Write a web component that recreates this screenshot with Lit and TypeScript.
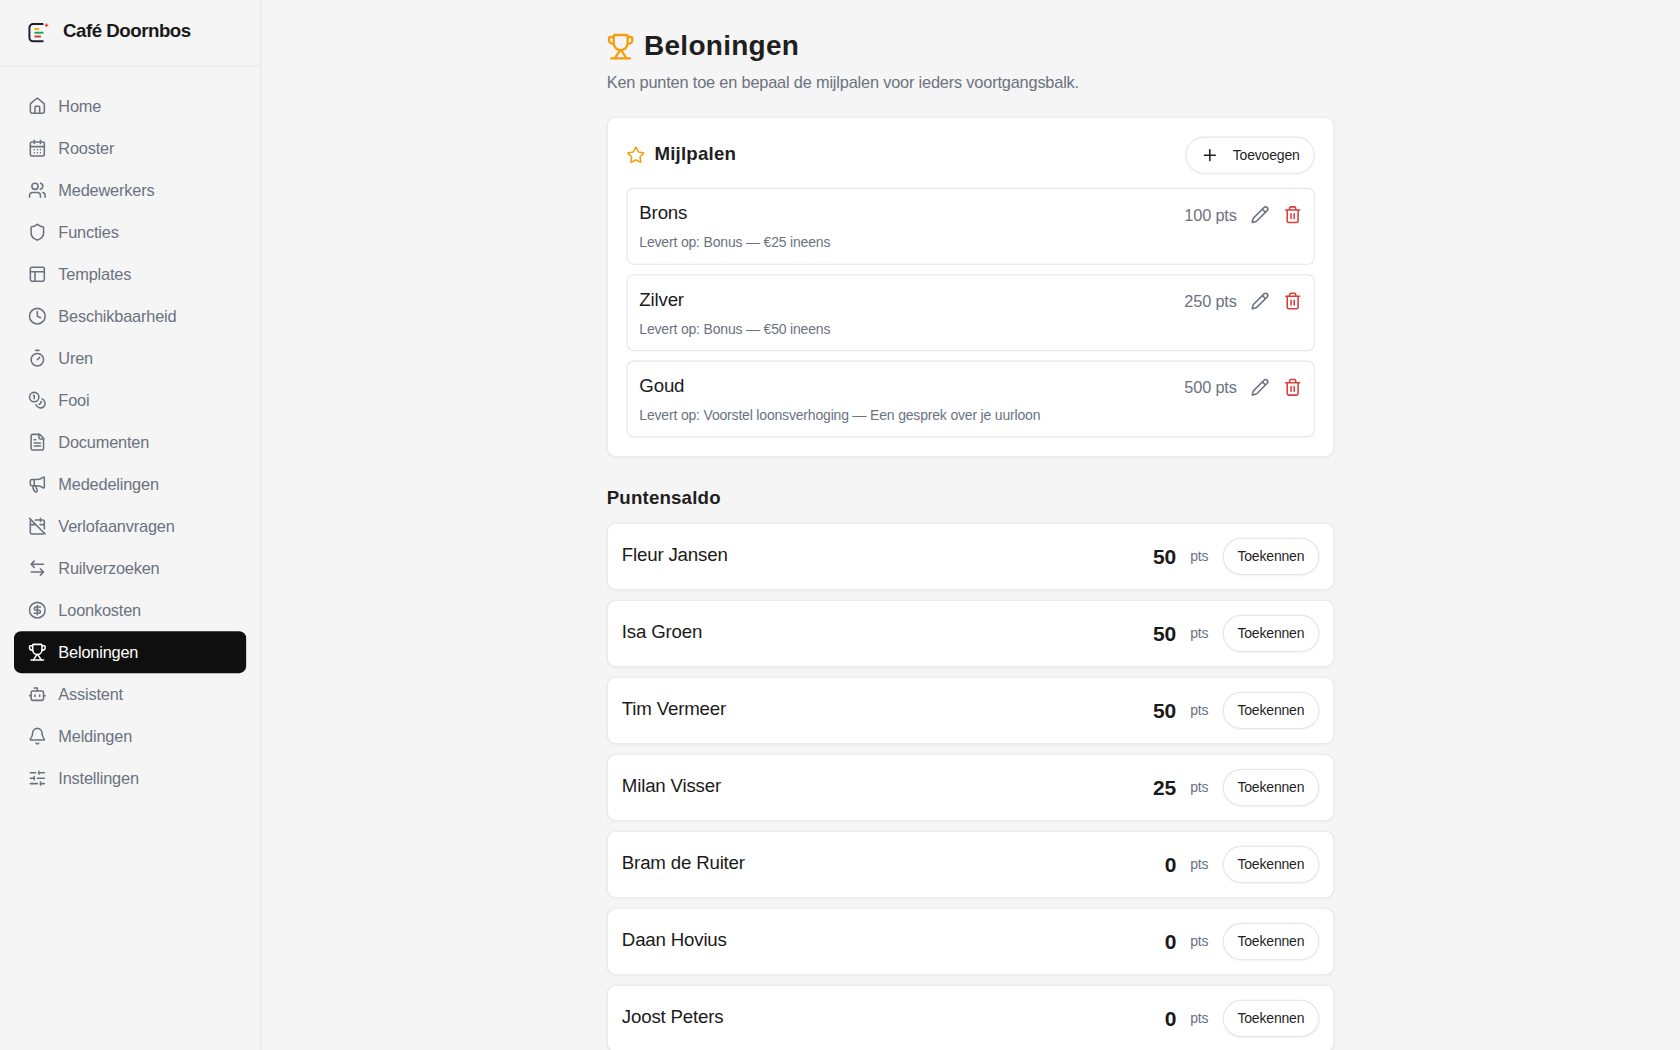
import { LitElement, html, css, svg } from "lit";
import { customElement, property } from "lit/decorators.js";
import { classMap } from "lit/directives/class-map.js";

const ICONS: Record<string, unknown> = {
  home: svg`<path d="M15 21v-8a1 1 0 0 0-1-1h-4a1 1 0 0 0-1 1v8"/><path d="M3 10a2 2 0 0 1 .709-1.528l7-6a2 2 0 0 1 2.582 0l7 6A2 2 0 0 1 21 10v9a2 2 0 0 1-2 2H5a2 2 0 0 1-2-2z"/>`,
  calendar: svg`<path d="M8 2v4M16 2v4"/><rect width="18" height="18" x="3" y="4" rx="2"/><path d="M3 10h18M8 14h.01M12 14h.01M16 14h.01M8 18h.01M12 18h.01M16 18h.01"/>`,
  users: svg`<path d="M16 21v-2a4 4 0 0 0-4-4H6a4 4 0 0 0-4 4v2"/><circle cx="9" cy="7" r="4"/><path d="M22 21v-2a4 4 0 0 0-3-3.87"/><path d="M16 3.13a4 4 0 0 1 0 7.75"/>`,
  shield: svg`<path d="M20 13c0 5-3.5 7.5-7.66 8.95a1 1 0 0 1-.67-.01C7.5 20.5 4 18 4 13V6a1 1 0 0 1 1-1c2 0 4.5-1.2 6.24-2.72a1.17 1.17 0 0 1 1.52 0C14.51 3.81 17 5 19 5a1 1 0 0 1 1 1z"/>`,
  panels: svg`<rect width="18" height="18" x="3" y="3" rx="2"/><path d="M3 9h18M9 21V9"/>`,
  clock: svg`<circle cx="12" cy="12" r="10"/><path d="M12 6v6l4 2"/>`,
  timer: svg`<path d="M10 2h4M12 14l3-3"/><circle cx="12" cy="14" r="8"/>`,
  coins: svg`<circle cx="8" cy="8" r="6"/><path d="M18.09 10.37A6 6 0 1 1 10.34 18"/><path d="M7 6h1v4"/><path d="m16.71 13.88.7.71-2.82 2.82"/>`,
  file: svg`<path d="M15 2H6a2 2 0 0 0-2 2v16a2 2 0 0 0 2 2h12a2 2 0 0 0 2-2V7Z"/><path d="M14 2v4a2 2 0 0 0 2 2h4M10 9H8M16 13H8M16 17H8"/>`,
  megaphone: svg`<path d="M11 6a13 13 0 0 0 8.4-2.8A1 1 0 0 1 21 4v12a1 1 0 0 1-1.6.8A13 13 0 0 0 11 14H5a2 2 0 0 1-2-2V8a2 2 0 0 1 2-2z"/><path d="M6 14a12 12 0 0 0 2.4 7.2 2 2 0 0 0 3.2-2.4A8 8 0 0 1 10 14"/><path d="M8 6v8"/>`,
  calendarOff: svg`<path d="M4.2 4.2A2 2 0 0 0 3 6v14a2 2 0 0 0 2 2h14a2 2 0 0 0 1.82-1.18"/><path d="M21 15.5V6a2 2 0 0 0-2-2H9.5"/><path d="M16 2v4M3 10h7M21 10h-5.5M2 2l20 20"/>`,
  swap: svg`<path d="M8 3 4 7l4 4M4 7h16M16 21l4-4-4-4M20 17H4"/>`,
  dollar: svg`<circle cx="12" cy="12" r="10"/><path d="M16 8h-6a2 2 0 1 0 0 4h4a2 2 0 1 1 0 4H8M12 18V6"/>`,
  trophy: svg`<path d="M11.4 15.2 7 21.978M12.6 15.2 17 21.978"/><path d="M18 9.4h1a3 3 0 0 0 3-3V5a1.3 1.3 0 0 0-1.3-1.3H18"/><path d="M4 22h16"/><path d="M6 9a6 6 0 0 0 12 0V3a1 1 0 0 0-1-1H7a1 1 0 0 0-1 1z"/><path d="M6 9.4H5a3 3 0 0 1-3-3V5a1.3 1.3 0 0 1 1.3-1.3H6"/>`,
  bot: svg`<path d="M12 8V4H8"/><rect width="16" height="12" x="4" y="8" rx="2"/><path d="M2 14h2M20 14h2M15 13v2M9 13v2"/>`,
  bell: svg`<path d="M10.268 21a2 2 0 0 0 3.464 0"/><path d="M3.262 15.326A1 1 0 0 0 4 17h16a1 1 0 0 0 .74-1.673C19.41 13.956 18 12.499 18 8A6 6 0 0 0 6 8c0 4.499-1.411 5.956-2.738 7.326"/>`,
  sliders: svg`<path d="M10 5H3M12 19H3M14 3v4M16 17v4M21 12h-9M21 19h-5M21 5h-7M8 10v4M8 12H3"/>`,
  star: svg`<path d="M11.525 2.295a.53.53 0 0 1 .95 0l2.31 4.679a2.123 2.123 0 0 0 1.595 1.16l5.166.756a.53.53 0 0 1 .294.904l-3.736 3.638a2.123 2.123 0 0 0-.611 1.878l.882 5.14a.53.53 0 0 1-.771.56l-4.618-2.428a2.122 2.122 0 0 0-1.973 0L6.396 21.01a.53.53 0 0 1-.77-.56l.881-5.139a2.122 2.122 0 0 0-.611-1.879L2.16 9.795a.53.53 0 0 1 .294-.906l5.165-.755a2.122 2.122 0 0 0 1.597-1.16z"/>`,
  plus: svg`<path d="M5 12h14M12 5v14"/>`,
  pencil: svg`<path d="M21.174 6.812a1 1 0 0 0-3.986-3.987L3.842 16.174a2 2 0 0 0-.5.83l-1.321 4.352a.5.5 0 0 0 .623.622l4.353-1.32a2 2 0 0 0 .83-.497z"/><path d="m15 5 4 4"/>`,
  trash: svg`<path d="M3 6h18M19 6v14a2 2 0 0 1-2 2H7a2 2 0 0 1-2-2V6M8 6V4a2 2 0 0 1 2-2h4a2 2 0 0 1 2 2v2M10 11v6M14 11v6"/>`,
};

@customElement("ui-icon")
class UiIcon extends LitElement {
  @property() name = "";
  static styles = css`
    :host { display: block; flex: none; width: 16px; height: 16px; }
    svg { display: block; width: 100%; height: 100%; fill: none; stroke: currentColor; stroke-width: 2; stroke-linecap: round; stroke-linejoin: round; }
  `;
  render() {
    return html`<svg viewBox="0 0 24 24" aria-hidden="true">${ICONS[this.name]}</svg>`;
  }
}

const NAV = [
  ["home", "Home"], ["calendar", "Rooster"], ["users", "Medewerkers"], ["shield", "Functies"],
  ["panels", "Templates"], ["clock", "Beschikbaarheid"], ["timer", "Uren"], ["coins", "Fooi"],
  ["file", "Documenten"], ["megaphone", "Mededelingen"], ["calendarOff", "Verlofaanvragen"],
  ["swap", "Ruilverzoeken"], ["dollar", "Loonkosten"], ["trophy", "Beloningen"],
  ["bot", "Assistent"], ["bell", "Meldingen"], ["sliders", "Instellingen"],
];

const MILESTONES = [
  { name: "Brons", points: 100, reward: "Levert op: Bonus — €25 ineens" },
  { name: "Zilver", points: 250, reward: "Levert op: Bonus — €50 ineens" },
  { name: "Goud", points: 500, reward: "Levert op: Voorstel loonsverhoging — Een gesprek over je uurloon" },
];

const BALANCES: [string, number][] = [
  ["Fleur Jansen", 50], ["Isa Groen", 50], ["Tim Vermeer", 50], ["Milan Visser", 25],
  ["Bram de Ruiter", 0], ["Daan Hovius", 0], ["Joost Peters", 0],
];

@customElement("app-root")
class AppRoot extends LitElement {
  static styles = css`
    :host {
      display: block;
      width: 1680px;
      height: 1050px;
      overflow: hidden;
      background: #f5f5f5;
      font-family: "Liberation Sans", Arial, sans-serif;
      font-size: 14px;
      letter-spacing: -0.011em;
      color: #1a1a1a;
    }
    * { box-sizing: border-box; }
    .app { display: flex; width: 1440px; height: 900px; overflow: hidden; background: #f5f5f5; transform: scale(1.166667); transform-origin: 0 0; }
    .sidebar { flex: none; width: 224px; border-right: 1px solid #e5e7e9; }
    .brand { display: flex; align-items: center; gap: 10px; height: 57px; padding: 0 24px; border-bottom: 1px solid #e5e7e9; }
    .logo { flex: none; width: 20px; height: 20px; }
    .brand-name { padding-bottom: 3px; font-size: 16px; line-height: 24px; font-weight: 700; letter-spacing: -0.025em; }
    .nav { display: flex; flex-direction: column; padding: 16px 12px; }
    .nav-item { display: flex; align-items: center; gap: 10px; height: 36px; padding: 0 12px; border-radius: 6px; color: #6b7280; line-height: 20px; }
    .nav-item.active { background: #0f0f0f; color: #fff; }
    .main { flex: 1; padding: 24px; overflow: hidden; }
    .content { width: 624px; margin: 0 auto; }
    .title { display: flex; align-items: center; gap: 8px; height: 32px; color: #f59e0b; }
    .title ui-icon { width: 24px; height: 24px; }
    h1, h2 { margin: 0; padding-bottom: 3px; color: #1f1f1f; font-weight: 700; letter-spacing: 0.01em; }
    h1 { font-size: 24px; line-height: 29px; }
    h2 { font-size: 16px; line-height: 21px; }
    .subtitle { margin: 4px 0 20px; line-height: 20px; color: #6b7280; }
    .card { border: 1px solid #e5e7e9; border-radius: 8px; background: #fff; box-shadow: 0 1px 2px rgb(0 0 0 / 0.02); }
    .milestones { display: flex; flex-direction: column; gap: 8px; padding: 16px; }
    .card-head { display: flex; align-items: center; gap: 8px; height: 32px; margin-bottom: 4px; color: #f59e0b; }
    .card-head h2 { flex: 1; }
    .pill { display: flex; align-items: center; gap: 12px; height: 32px; padding: 0 12px; border: 1px solid #e5e7e9; border-radius: 16px; background: #fff; color: #1f1f1f; font: inherit; font-size: 12px; letter-spacing: inherit; box-shadow: 0 1px 2px rgb(0 0 0 / 0.04); }
    .milestone { display: flex; flex-direction: column; gap: 4px; padding: 10px; border: 1px solid #e5e7e9; border-radius: 6px; }
    .line { display: flex; align-items: center; gap: 12px; height: 24px; color: #6b7280; }
    .name { flex: 1; padding-bottom: 3px; font-size: 16px; line-height: 21px; color: #1a1a1a; }
    .danger { color: #dc3c3c; }
    .reward { font-size: 12px; line-height: 16px; color: #6b7280; }
    .section-title { margin: 24px 0 8px; }
    .balances { display: flex; flex-direction: column; gap: 8px; }
    .balance { display: flex; align-items: center; gap: 12px; padding: 12px; }
    .points { font-size: 18px; font-weight: 700; }
    .unit { font-size: 12px; color: #6b7280; }
  `;

  render() {
    return html`<div class="app">
      <aside class="sidebar">
        <div class="brand">
          <svg class="logo" viewBox="0 0 20 20" fill="none" stroke-linecap="round">
            <path d="M12.6 2.6H4.4A3.2 3.2 0 0 0 1.2 5.8v8.4a3.2 3.2 0 0 0 3.2 3.2h8.2" stroke="#1b2030" stroke-width="1.7"/>
            <path d="M6.2 6.9h2.7" stroke="#eab308" stroke-width="1.6"/>
            <path d="M6.2 10.1h6.4" stroke="#22a45a" stroke-width="1.6"/>
            <path d="M6.2 13.3h4.2" stroke="#dc3c2c" stroke-width="1.6"/>
            <path d="M15.9 1.6l.6 1.5 1.5.6-1.5.6-.6 1.5-.6-1.5-1.5-.6 1.5-.6z" fill="#dc3c3c"/>
          </svg>
          <span class="brand-name">Café Doornbos</span>
        </div>
        <nav class="nav">
          ${NAV.map(([icon, label]) => html`<a class=${classMap({ "nav-item": true, active: label === "Beloningen" })}><ui-icon name=${icon}></ui-icon><span>${label}</span></a>`)}
        </nav>
      </aside>
      <main class="main">
        <div class="content">
          <div class="title"><ui-icon name="trophy"></ui-icon><h1>Beloningen</h1></div>
          <p class="subtitle">Ken punten toe en bepaal de mijlpalen voor ieders voortgangsbalk.</p>
          <section class="card milestones">
            <div class="card-head">
              <ui-icon name="star"></ui-icon>
              <h2>Mijlpalen</h2>
              <button class="pill"><ui-icon name="plus"></ui-icon>Toevoegen</button>
            </div>
            ${MILESTONES.map((m) => html`<div class="milestone">
              <div class="line">
                <span class="name">${m.name}</span>
                <span>${m.points} pts</span>
                <ui-icon name="pencil"></ui-icon>
                <ui-icon class="danger" name="trash"></ui-icon>
              </div>
              <div class="reward">${m.reward}</div>
            </div>`)}
          </section>
          <h2 class="section-title">Puntensaldo</h2>
          <div class="balances">
            ${BALANCES.map(([name, points]) => html`<div class="card balance">
              <span class="name">${name}</span>
              <span class="points">${points}</span>
              <span class="unit">pts</span>
              <button class="pill">Toekennen</button>
            </div>`)}
          </div>
        </div>
      </main>
    </div>`;
  }
}
